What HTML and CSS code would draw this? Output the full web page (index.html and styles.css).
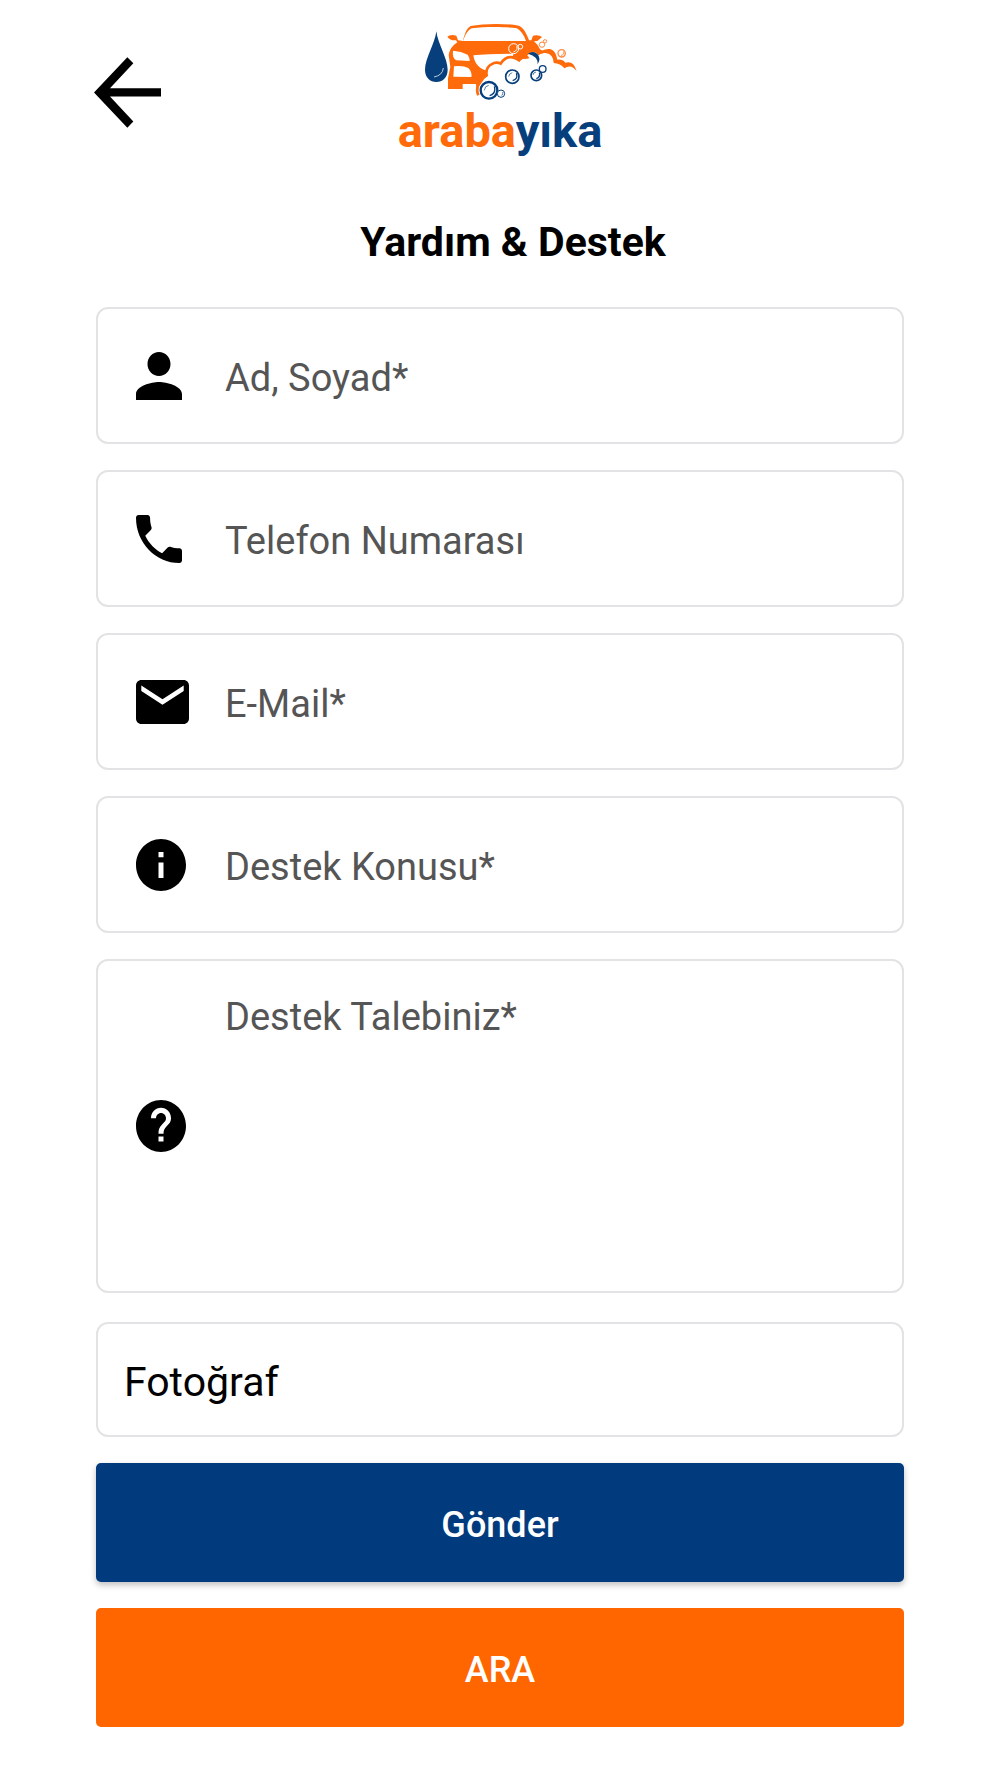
FILE: index.html
```html
<!DOCTYPE html>
<html lang="tr">
<head>
    <meta charset="UTF-8">
    <meta name="viewport" content="width=device-width, initial-scale=1.0">
    <title>Yardım & Destek</title>
    <link rel="stylesheet" href="styles.css">
</head>
<body>
    <header class="header">
        <button class="back" type="button" aria-label="Geri">
            <svg width="67" height="71" viewBox="42 50 201 212">
                <path d="M42 156 142 50 160 68 90 143H243V168H90L160 243 142 262Z"/>
            </svg>
        </button>
        <div class="logo">
            <svg class="logo-car" width="160" height="84" viewBox="90 30 480 252">
                <!-- water drop -->
                <path fill="#063f7c" d="M139 64C143 100 173 145 173 179C173 202 158 216 139 216C120 216 105 202 105 179C105 145 135 100 139 64Z"/>
                <path fill="none" stroke="#b9cbe0" stroke-width="3" d="M160 174Q158 196 132 201"/>
                <!-- car body -->
                <g fill="#ff6a0a">
                    <path d="M172 80Q176 75 188 75L199 77 204 91 219 93C224 70 231 54 242 48C282 40 350 40 386 47C400 52 410 70 417 91L424 91 429 77Q447 74 456 81L442 93 432 94Q444 104 450 118L470 130 440 145 300 190 262 256 258 222 218 222V237H174V205L181 170 176 135Q179 112 202 97L198 91Q180 92 172 80Z"/>
                    <path fill="#fff" d="M219 93C226 73 235 58 246 55C285 50 345 50 380 55C394 62 402 77 408 93Z"/>
                    <path fill="#fff" d="M189 122Q214 124 233 134Q240 144 239 153L199 151Q186 145 189 122Z"/>
                    <path fill="#fff" d="M192 169Q220 166 235 174Q247 186 244 201L190 200Z"/>
                    <path fill="#fff" d="M250 136Q292 132 370 131L365 160 300 185Q255 176 250 136Z"/>
                </g>
                <!-- foam -->
                <path fill="#fff" d="M266 258Q260 238 270 220Q276 204 290 199Q288 174 305 164Q319 155 334 162Q346 142 367 145Q380 148 387 153Q398 142 412 146L440 139Q452 127 472 128Q492 132 496 160Q510 156 521 170Q545 158 557 184V282H266Z"/>
                <path fill="none" stroke="#ff6a0a" stroke-width="8" d="M265 256Q256 234 270 218Q276 204 290 196Q286 173 304 163Q319 154 332 161Q346 138 368 142Q379 144 387 151Q398 138 410 144"/>
                <path fill="#ff6a0a" d="M440 139Q454 115 480 117Q498 121 502 149Q518 147 526 158Q551 150 560 184Q544 160 523 175Q511 160 491 159Q490 132 467 129Q452 128 440 139Z"/>
                <path fill="#fff" d="M412 136Q424 123 438 128Q450 138 447 160L430 160Z"/>
                <path fill="#063f7c" d="M414 131Q430 121 442 132Q454 145 443 163Q445 139 414 131Z"/>
                <!-- bubbles -->
                <g fill="#fff" stroke="#063f7c">
                    <circle cx="297" cy="241" r="25" stroke-width="7"/>
                    <circle cx="333" cy="251" r="11" stroke-width="3"/>
                    <circle cx="367" cy="200" r="20" stroke-width="5"/>
                    <circle cx="439" cy="196" r="16" stroke-width="5"/>
                    <circle cx="458" cy="177" r="10" stroke-width="4"/>
                    <path fill="none" stroke-width="4" d="M313 229Q319 250 299 257M379 190Q385 207 368 212M448 188Q452 202 439 206"/>
                    <path fill="none" stroke-width="2" d="M283 241Q284 228 296 226M356 200Q357 190 367 188M429 195Q430 187 438 186M335 257Q340 252 338 246"/>
                </g>
                <g fill="none" stroke="#fff" stroke-width="3">
                    <circle cx="371" cy="116" r="15"/>
                    <circle cx="391" cy="110" r="7"/>
                    <path d="M380 109Q385 121 370 126"/>
                </g>
                <g fill="none" stroke="#ff8a42" stroke-width="3">
                    <circle cx="456" cy="104" r="8"/>
                    <circle cx="465" cy="94" r="5"/>
                    <circle cx="515" cy="130" r="11" stroke-width="4"/>
                    <path d="M521 124Q524 135 513 136"/>
                </g>
            </svg>
            <div class="logo-text">araba<span>yıka</span></div>
        </div>
    </header>

    <main class="container">
        <h1>Yardım &amp; Destek</h1>
        <form action="#" method="post">
            <div class="field">
                <label for="name" aria-label="Ad, Soyad">
                    <svg width="46" height="48" viewBox="4 4 16 16" preserveAspectRatio="none"><path d="M12 12c2.210 0 4-1.790 4-4s-1.790-4-4-4-4 1.790-4 4 1.790 4 4 4zm0 2c-2.670 0-8 1.340-8 4v2h16v-2c0-2.660-5.330-4-8-4z"/></svg>
                </label>
                <input type="text" id="name" name="name" placeholder="Ad, Soyad*">
            </div>
            <div class="field">
                <label for="phone" aria-label="Telefon Numarası">
                    <svg width="46" height="48" viewBox="3 3 18 18" preserveAspectRatio="none"><path d="M6.620 10.790c1.440 2.830 3.760 5.140 6.590 6.590l2.200-2.200c.27-.27.67-.36 1.020-.24 1.120.37 2.330.57 3.570.57.55 0 1 .45 1 1V20c0 .55-.45 1-1 1-9.390 0-17-7.610-17-17 0-.55.45-1 1-1h3.500c.55 0 1 .45 1 1 0 1.250.2 2.450.57 3.570.11.35.03.74-.25 1.020l-2.200 2.200z"/></svg>
                </label>
                <input type="tel" id="phone" name="phone" placeholder="Telefon Numarası">
            </div>
            <div class="field">
                <label for="email" aria-label="E-Mail">
                    <svg width="53" height="44" viewBox="2 4 20 16" preserveAspectRatio="none"><path d="M20 4H4c-1.100 0-1.990.9-1.990 2L2 18c0 1.100.9 2 2 2h16c1.100 0 2-.9 2-2V6c0-1.100-.9-2-2-2zm0 4l-8 5-8-5V6l8 5 8-5v2z"/></svg>
                </label>
                <input type="email" id="email" name="email" placeholder="E-Mail*">
            </div>
            <div class="field">
                <label for="subject" aria-label="Destek Konusu">
                    <svg width="50" height="52" viewBox="2 2 20 20" preserveAspectRatio="none"><path d="M12 2C6.480 2 2 6.480 2 12s4.480 10 10 10 10-4.480 10-10S17.520 2 12 2zm1 15h-2v-6h2v6zm0-8h-2V7h2v2z"/></svg>
                </label>
                <input type="text" id="subject" name="subject" placeholder="Destek Konusu*">
            </div>
            <div class="field field-large">
                <label for="request" aria-label="Destek Talebiniz">
                    <svg width="50" height="52" viewBox="2 2 20 20" preserveAspectRatio="none"><path d="M12 2C6.480 2 2 6.480 2 12s4.480 10 10 10 10-4.480 10-10S17.520 2 12 2zm1 16h-2v-2h2v2zm2.070-6.750l-.9.920C13.450 12.900 13 13.500 13 15h-2v-.5c0-1.100.45-2.100 1.170-2.830l1.240-1.260c.37-.36.59-.86.59-1.410 0-1.100-.9-2-2-2s-2 .9-2 2H8c0-2.210 1.790-4 4-4s4 1.790 4 4c0 .88-.36 1.680-.93 2.250z"/></svg>
                </label>
                <textarea id="request" name="request" placeholder="Destek Talebiniz*"></textarea>
            </div>
            <button class="photo" type="button">Fotoğraf</button>
            <button class="btn send" type="submit">Gönder</button>
            <button class="btn call" type="button">ARA</button>
        </form>
    </main>
</body>
</html>
```

FILE: styles.css
```css
* {
    box-sizing: border-box;
}
body {
    margin: 0;
    background-color: #fff;
    color: #000;
    font-family: Roboto, Arial, sans-serif;
}
button, input, textarea {
    font-family: inherit;
}
button {
    cursor: pointer;
}
svg {
    display: block;
}

/* Header */
.header {
    display: grid;
    grid-template-columns: 1fr auto 1fr;
    align-items: center;
    padding: 20px 94px 0;
}
.back {
    justify-self: start;
    padding: 0;
    border: none;
    background: none;
}
.logo {
    display: flex;
    flex-direction: column;
    align-items: center;
    padding-bottom: 6px;
}
.logo-text {
    color: #ff6a0a;
    font-size: 47px;
    font-weight: bold;
    line-height: 54px;
}
.logo-text span {
    color: #063f7c;
}

/* Form */
.container {
    padding: 0 96px 50px;
}
h1 {
    margin: 0;
    padding: 48px 0 35px 26px;
    font-size: 41px;
    font-weight: 700;
    line-height: 60px;
    text-align: center;
}
form {
    display: flex;
    flex-direction: column;
    gap: 26px;
}
.field {
    display: grid;
    grid-template-columns: 89px 1fr;
    align-items: center;
    height: 137px;
    padding-left: 38px;
    border: 2px solid #e3e3e5;
    border-radius: 12px;
}
.field-large {
    height: 334px;
}
.field input,
.field textarea {
    width: 100%;
    height: 100%;
    padding: 4px 20px 0 0;
    border: none;
    outline: none;
    background: none;
    color: #000;
    font-size: 38px;
    line-height: 48px;
}
.field textarea {
    padding-top: 32px;
    resize: none;
}
::placeholder {
    color: #555;
    opacity: 1;
}
.photo {
    height: 115px;
    margin-top: 3px;
    padding: 4px 26px 0;
    border: 2px solid #e3e3e5;
    border-radius: 12px;
    background: #fff;
    color: #000;
    font-size: 41px;
    text-align: left;
}
.btn {
    height: 119px;
    padding: 4px 0 0;
    border: none;
    border-radius: 5px;
    color: #fff;
    font-size: 36px;
    font-weight: 500;
}
.send {
    background-color: #013a7d;
    box-shadow: 0 3px 6px rgba(0, 0, 0, 0.25);
}
.call {
    background-color: #ff6600;
}
```
